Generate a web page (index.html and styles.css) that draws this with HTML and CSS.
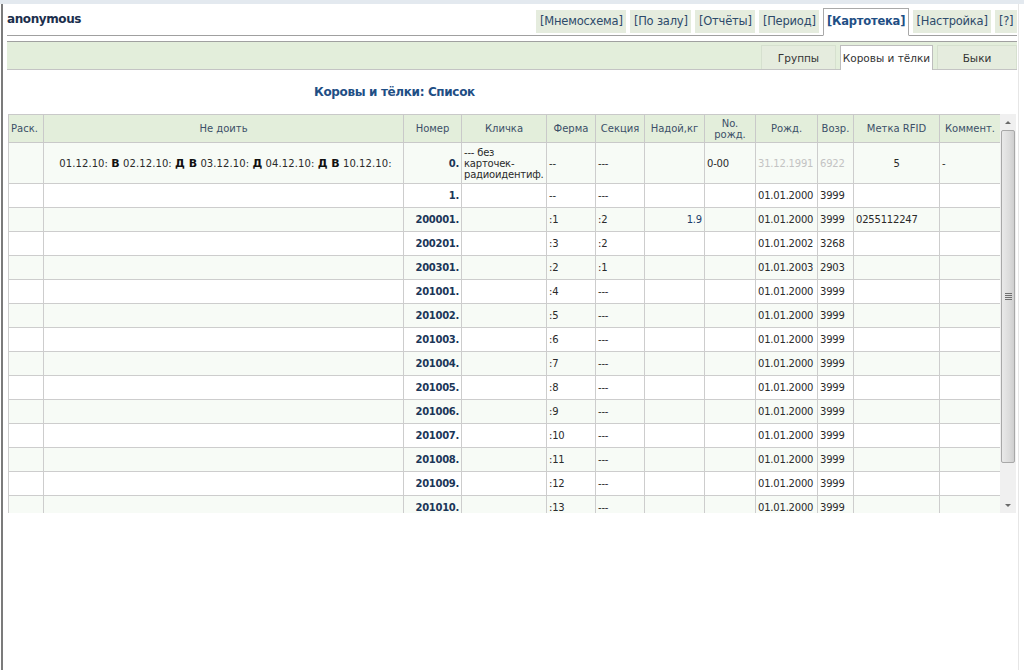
FILE: index.html
```html
<!DOCTYPE html>
<html lang="ru">
<head>
<meta charset="utf-8">
<title>Картотека</title>
<link rel="stylesheet" href="styles.css">
</head>
<body>
<div class="topstrip"></div>
<div class="frame">
  <div class="head">
    <div class="user">anonymous</div>
    <nav class="tabs">
      <span class="tab">[Мнемосхема]</span>
      <span class="tab">[По залу]</span>
      <span class="tab">[Отчёты]</span>
      <span class="tab">[Период]</span>
      <span class="tab active">[Картотека]</span>
      <span class="tab">[Настройка]</span>
      <span class="tab">[?]</span>
    </nav>
  </div>
  <div class="subbar">
    <span class="stab">Группы</span>
    <span class="stab active">Коровы и тёлки</span>
    <span class="stab wide">Быки</span>
  </div>
  <h1 class="title">Коровы и тёлки: Список</h1>
  <div class="gridwrap">
    <div class="gridbox">
      <table class="grid">
        <colgroup>
          <col style="width:35px"><col style="width:360px"><col style="width:58px"><col style="width:85px">
          <col style="width:49px"><col style="width:49px"><col style="width:60px"><col style="width:51px">
          <col style="width:62px"><col style="width:36px"><col style="width:86px"><col style="width:61px">
        </colgroup>
        <thead>
          <tr>
            <th class="l">Раск.</th><th>Не доить</th><th>Номер</th><th>Кличка</th><th>Ферма</th><th>Секция</th>
            <th>Надой,кг</th><th>No.<br>рожд.</th><th>Рожд.</th><th>Возр.</th><th>Метка RFID</th><th>Коммент.</th>
          </tr>
        </thead>
        <tbody>
          <tr class="alt tall">
            <td></td>
            <td class="nd">01.12.10: <b>В</b> 02.12.10: <b>Д В</b> 03.12.10: <b>Д</b> 04.12.10: <b>Д В</b> 10.12.10:</td>
            <td class="num">0.</td>
            <td class="name">--- без карточек-радиоидентиф.</td>
            <td>--</td><td>---</td><td></td><td>0-00</td>
            <td class="dim">31.12.1991</td><td class="dim">6922</td><td class="c">5</td><td>-</td>
          </tr>
          <tr><td></td><td></td><td class="num">1.</td><td></td><td>--</td><td>---</td><td></td><td></td><td>01.01.2000</td><td>3999</td><td></td><td></td></tr>
          <tr class="alt"><td></td><td></td><td class="num">200001.</td><td></td><td>:1</td><td>:2</td><td class="r val">1.9</td><td></td><td>01.01.2000</td><td>3999</td><td>0255112247</td><td></td></tr>
          <tr><td></td><td></td><td class="num">200201.</td><td></td><td>:3</td><td>:2</td><td></td><td></td><td>01.01.2002</td><td>3268</td><td></td><td></td></tr>
          <tr class="alt"><td></td><td></td><td class="num">200301.</td><td></td><td>:2</td><td>:1</td><td></td><td></td><td>01.01.2003</td><td>2903</td><td></td><td></td></tr>
          <tr><td></td><td></td><td class="num">201001.</td><td></td><td>:4</td><td>---</td><td></td><td></td><td>01.01.2000</td><td>3999</td><td></td><td></td></tr>
          <tr class="alt"><td></td><td></td><td class="num">201002.</td><td></td><td>:5</td><td>---</td><td></td><td></td><td>01.01.2000</td><td>3999</td><td></td><td></td></tr>
          <tr><td></td><td></td><td class="num">201003.</td><td></td><td>:6</td><td>---</td><td></td><td></td><td>01.01.2000</td><td>3999</td><td></td><td></td></tr>
          <tr class="alt"><td></td><td></td><td class="num">201004.</td><td></td><td>:7</td><td>---</td><td></td><td></td><td>01.01.2000</td><td>3999</td><td></td><td></td></tr>
          <tr><td></td><td></td><td class="num">201005.</td><td></td><td>:8</td><td>---</td><td></td><td></td><td>01.01.2000</td><td>3999</td><td></td><td></td></tr>
          <tr class="alt"><td></td><td></td><td class="num">201006.</td><td></td><td>:9</td><td>---</td><td></td><td></td><td>01.01.2000</td><td>3999</td><td></td><td></td></tr>
          <tr><td></td><td></td><td class="num">201007.</td><td></td><td>:10</td><td>---</td><td></td><td></td><td>01.01.2000</td><td>3999</td><td></td><td></td></tr>
          <tr class="alt"><td></td><td></td><td class="num">201008.</td><td></td><td>:11</td><td>---</td><td></td><td></td><td>01.01.2000</td><td>3999</td><td></td><td></td></tr>
          <tr><td></td><td></td><td class="num">201009.</td><td></td><td>:12</td><td>---</td><td></td><td></td><td>01.01.2000</td><td>3999</td><td></td><td></td></tr>
          <tr class="alt"><td></td><td></td><td class="num">201010.</td><td></td><td>:13</td><td>---</td><td></td><td></td><td>01.01.2000</td><td>3999</td><td></td><td></td></tr>
        </tbody>
      </table>
    </div>
    <div class="scrollbar">
      <div class="sbtn up"><span class="arrow-up"></span></div>
      <div class="track">
        <div class="thumb"><span class="grip"></span></div>
      </div>
      <div class="sbtn down"><span class="arrow-down"></span></div>
    </div>
  </div>
</div>
</body>
</html>
```

FILE: styles.css
```css
html, body {
  margin: 0;
  padding: 0;
  background: #ffffff;
}
body {
  font-family: Tahoma, "DejaVu Sans", sans-serif;
  font-size: 11px;
  color: #333333;
  width: 1024px;
  height: 670px;
  overflow: hidden;
}
.topstrip {
  height: 4px;
  background: #e3e9ef;
}
.frame {
  margin-left: 1px;
  border-left: 2px solid #7b7b7b;
  height: 666px;
  padding-left: 4px;
  padding-right: 1px;
  box-sizing: border-box;
  border-right: 1px solid #e6e6e6;
  width: 1018px;
}
.head {
  display: flex;
  justify-content: space-between;
  align-items: flex-end;
  height: 31px;
  border-bottom: 1px solid #a0a0a0;
}
.user {
  align-self: flex-start;
  margin-top: 8px;
  font-family: "DejaVu Sans", sans-serif;
  font-weight: bold;
  font-size: 12px;
  letter-spacing: -0.4px;
  color: #1c2f4d;
}
.tabs {
  display: flex;
  align-items: flex-end;
  gap: 4px;
  margin-bottom: -1px;
}
.tab {
  font-family: "DejaVu Sans", sans-serif;
  font-size: 11.5px;
  letter-spacing: -0.2px;
  color: #2d4a6a;
  background: #e5ecde;
  border: 1px solid #e5ecde;
  height: 21px;
  line-height: 21px;
  padding: 0 2.6px;
  margin-bottom: 3px;
}
.tab.active {
  background: #ffffff;
  border: 1px solid #a9a9a9;
  border-bottom: 1px solid #ffffff;
  height: 26px;
  line-height: 24px;
  margin-bottom: 0;
  font-weight: bold;
  color: #1f4f85;
}
.subbar {
  margin-top: 5px;
  border-top: 1px solid #a0a0a0;
  border-bottom: 1px solid #c4c4c4;
  background: #e3eedb;
  height: 27px;
  display: flex;
  justify-content: flex-end;
  align-items: flex-end;
  gap: 4px;
}
.stab {
  font-family: "DejaVu Sans", sans-serif;
  font-size: 10.5px;
  color: #333333;
  background: #e5ecde;
  border: 1px solid #d6e0cf;
  border-bottom: none;
  width: 73px;
  height: 23px;
  line-height: 24px;
  text-align: center;
  margin-bottom: 0;
}
.stab.active {
  background: #ffffff;
  border: 1px solid #bdbdbd;
  border-bottom: none;
  width: 91px;
  margin-bottom: -1px;
  height: 24px;
}
.stab.wide {
  width: 78px;
}
.title {
  margin: 13px 0 13px 307px;
  height: 18px;
  font-family: "DejaVu Sans", sans-serif;
  font-size: 12px;
  letter-spacing: -0.35px;
  line-height: 18px;
  font-weight: bold;
  color: #1f4f85;
}
.gridwrap {
  display: flex;
  margin-left: 1px;
  height: 399px;
}
.gridbox {
  width: 992px;
  height: 399px;
  overflow: hidden;
}
.grid {
  border-collapse: collapse;
  table-layout: fixed;
  width: 992px;
  font-family: "DejaVu Sans", sans-serif;
  font-size: 10px;
}
.grid th {
  background: #e3eedb;
  color: #3c5068;
  font-weight: normal;
  border: 1px solid #c9c9c9;
  height: 27px;
  padding: 0 2px;
  line-height: 11px;
  text-align: center;
}
.grid th.l {
  text-align: left;
}
.grid td {
  border: 1px solid #cdcdcd;
  height: 23px;
  padding: 0 2px;
  white-space: nowrap;
  overflow: hidden;
  color: #2a2a2a;
  letter-spacing: -0.2px;
}
.grid tr.alt td {
  background: #f7fbf6;
}
.grid tr.tall td {
  height: 40px;
}
.grid td.num {
  text-align: right;
  font-weight: bold;
  color: #1b3658;
  letter-spacing: -0.3px;
}
.grid td.name {
  white-space: normal;
  line-height: 11px;
}
.grid td.nd {
  text-align: center;
  font-size: 10px;
  letter-spacing: 0.1px;
  padding-left: 6px;
}
.grid td.nd b {
  font-size: 11px;
  color: #111;
  letter-spacing: 0;
}
.grid td.dim {
  color: #c3c3c3;
}
.grid td.c {
  text-align: center;
}
.grid td.r {
  text-align: right;
}
.grid td.val {
  color: #1b3d6a;
}
.scrollbar {
  width: 16px;
  height: 399px;
  background: #f0f0f0;
  display: flex;
  flex-direction: column;
}
.sbtn {
  height: 16px;
  display: flex;
  align-items: center;
  justify-content: center;
}
.arrow-up {
  width: 0;
  height: 0;
  border-left: 3px solid transparent;
  border-right: 3px solid transparent;
  border-bottom: 3px solid #6a6a6a;
}
.arrow-down {
  width: 0;
  height: 0;
  border-left: 3px solid transparent;
  border-right: 3px solid transparent;
  border-top: 3px solid #6a6a6a;
}
.track {
  flex: 1;
  padding: 0 1px;
  display: flex;
  flex-direction: column;
}
.thumb {
  height: 333px;
  background: linear-gradient(to right, #e9e9e9, #dcdcdc 60%, #cfcfcf);
  border: 1px solid #a8a8a8;
  border-radius: 2px;
  display: flex;
  align-items: center;
  justify-content: center;
  box-sizing: border-box;
}
.grip {
  width: 7px;
  height: 7px;
  background: repeating-linear-gradient(to bottom, #6f6f6f 0, #6f6f6f 1px, transparent 1px, transparent 2px);
}
```
